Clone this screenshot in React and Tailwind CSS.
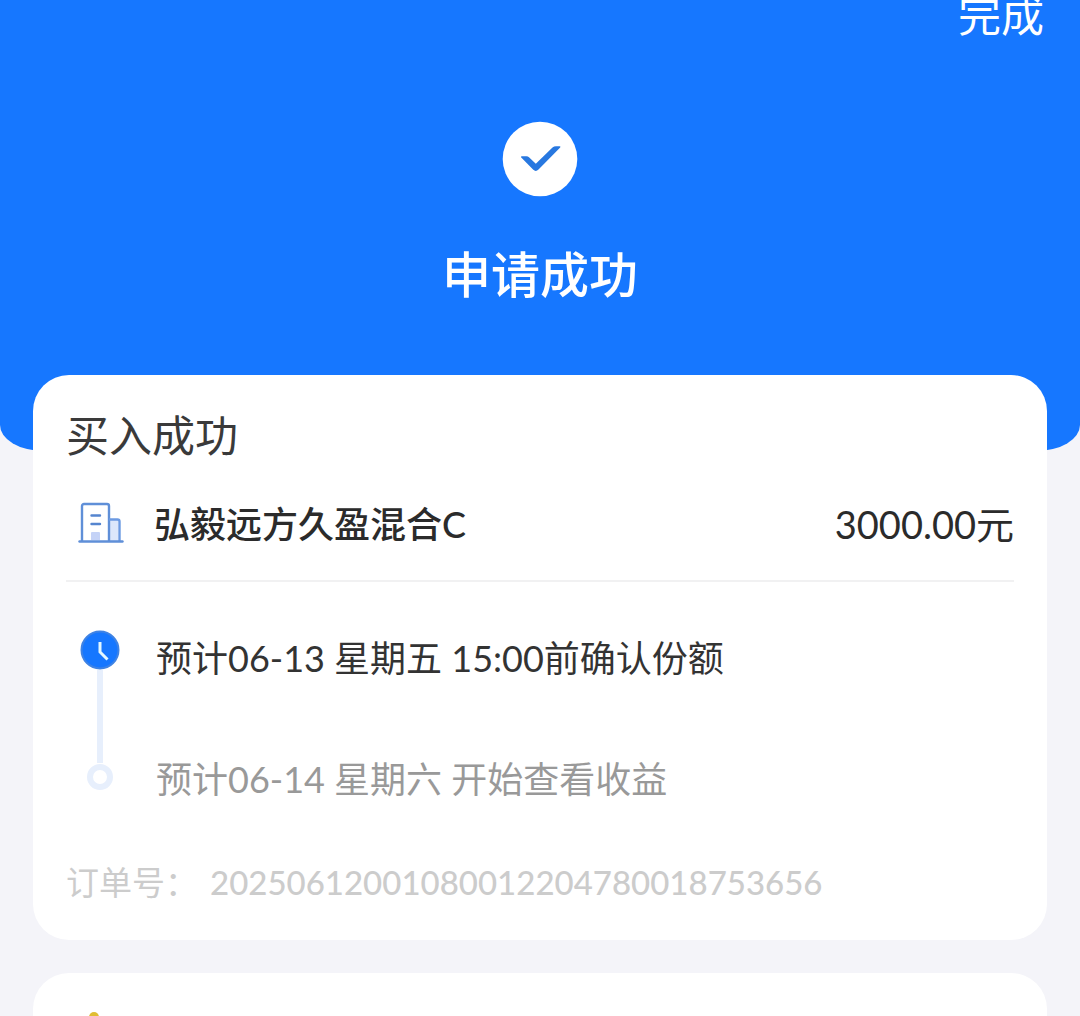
const steps = [
  { text: "预计06-13 星期五 15:00前确认份额", active: true },
  { text: "预计06-14 星期六 开始查看收益", active: false },
];

function CheckBadge() {
  return (
    <svg className="size-[76px]" viewBox="0 0 76 76" aria-hidden="true">
      <circle cx="38" cy="38" r="37.3" fill="#fff" />
      <path
        d="M19 36.2 Q18.600 35.200 20 35.200 H24.500 Q26 35.200 27 36.200 L33.800 42.700 L50.500 26.600 Q52 25.200 54 25.200 H57.500 Q59 25.200 58.200 26.400 L36.500 48.600 Q33.800 51.200 31.300 48.800 Z"
        fill="#2878e0"
      />
    </svg>
  );
}

function BuildingIcon() {
  return (
    <svg className="h-11 w-[46px]" viewBox="0 0 46 44" fill="none" aria-hidden="true">
      <path d="M13 38V31a1 1 0 0 1 1-1h7a1 1 0 0 1 1 1v7z" fill="#c5d3f7" />
      <path d="M32 17h8v22h-8z" fill="#dce7fb" />
      <path d="M4 39V4a2 2 0 0 1 2-2h23a2 2 0 0 1 2 2v35" stroke="#5f8fd8" strokeWidth="2.400" />
      <path d="M31 17.500h8.500a2 2 0 0 1 2 2V39" stroke="#6c9ae2" strokeWidth="2.400" />
      <path d="M13.500 13.500h8.500M13.500 22h8.500" stroke="#5585cf" strokeWidth="2.400" strokeLinecap="round" />
      <path d="M1.500 39.500h43" stroke="#5f8fd8" strokeWidth="2.400" strokeLinecap="round" />
    </svg>
  );
}

function ClockDot() {
  return (
    <svg className="size-10" viewBox="0 0 40 40" fill="none" aria-hidden="true">
      <circle cx="20" cy="20" r="18.500" fill="#1677ff" stroke="#3f83e4" strokeWidth="2" />
      <path d="M20 12v10l7.500 7.500" stroke="#e3f8ff" strokeWidth="3" />
    </svg>
  );
}

export default function App() {
  return (
    <main className="h-screen overflow-hidden bg-[#f4f4f9] font-[Lato,'Noto_Sans_CJK_SC',sans-serif]">
      <header className="flex flex-col items-center rounded-b-[44px_26px] bg-[#1677ff] pb-[147px] text-white">
        <button type="button" className="mr-9 self-end text-[43px] leading-8">
          完成
        </button>
        <div className="mt-[89px]">
          <CheckBadge />
        </div>
        <h1 className="mt-[47px] text-[49px] leading-[60px] font-medium">申请成功</h1>
      </header>

      <section className="mx-[33px] -mt-[76px] rounded-[36px] bg-white px-[33px] pt-[31px] pb-[34px]">
        <h2 className="text-[43px] leading-[60px] text-[#3a3a3a]">买入成功</h2>

        <div className="flex items-center justify-between border-b-2 border-[#f1f1f2] pt-7 pb-[26px] text-[#2b2b2b]">
          <div className="flex items-center gap-[30px] pl-3">
            <BuildingIcon />
            <span className="text-4xl leading-[60px] font-medium">弘毅远方久盈混合C</span>
          </div>
          <span className="text-[38px] leading-[60px]">3000.00元</span>
        </div>

        <ol className="mt-12">
          {steps.map((step) => (
            <li key={step.text} className="flex gap-9 pl-[14px]">
              <div className="flex w-10 flex-col items-center">
                {step.active ? (
                  <>
                    <ClockDot />
                    <span className="w-[6px] grow bg-[#e7effc]" />
                  </>
                ) : (
                  <>
                    <span className="h-3 w-[6px] bg-[#e7effc]" />
                    <span className="mt-px size-[26px] rounded-full border-[6px] border-[#e7effc]" />
                  </>
                )}
              </div>
              <p
                className={
                  step.active
                    ? "pb-[65px] text-4xl leading-[56px] text-[#333333]"
                    : "text-4xl leading-[56px] text-[#999999]"
                }
              >
                {step.text}
              </p>
            </li>
          ))}
        </ol>

        <p className="mt-[51px] flex gap-3 text-[33px] leading-[48px] text-[#cccccc]">
          <span>订单号：</span>
          <span className="font-medium">20250612001080012204780018753656</span>
        </p>
      </section>

      <section className="mx-[33px] mt-[33px] rounded-[36px] bg-white px-[33px] pt-[38px] pb-8">
        <svg className="ml-2 size-10" viewBox="0 0 40 40" aria-hidden="true">
          <circle cx="20" cy="6" r="5" fill="#e0bd33" />
          <path d="M4 14l8 6 8-12 8 12 8-6-4 20H8z" fill="#e0bd33" />
        </svg>
      </section>
    </main>
  );
}
